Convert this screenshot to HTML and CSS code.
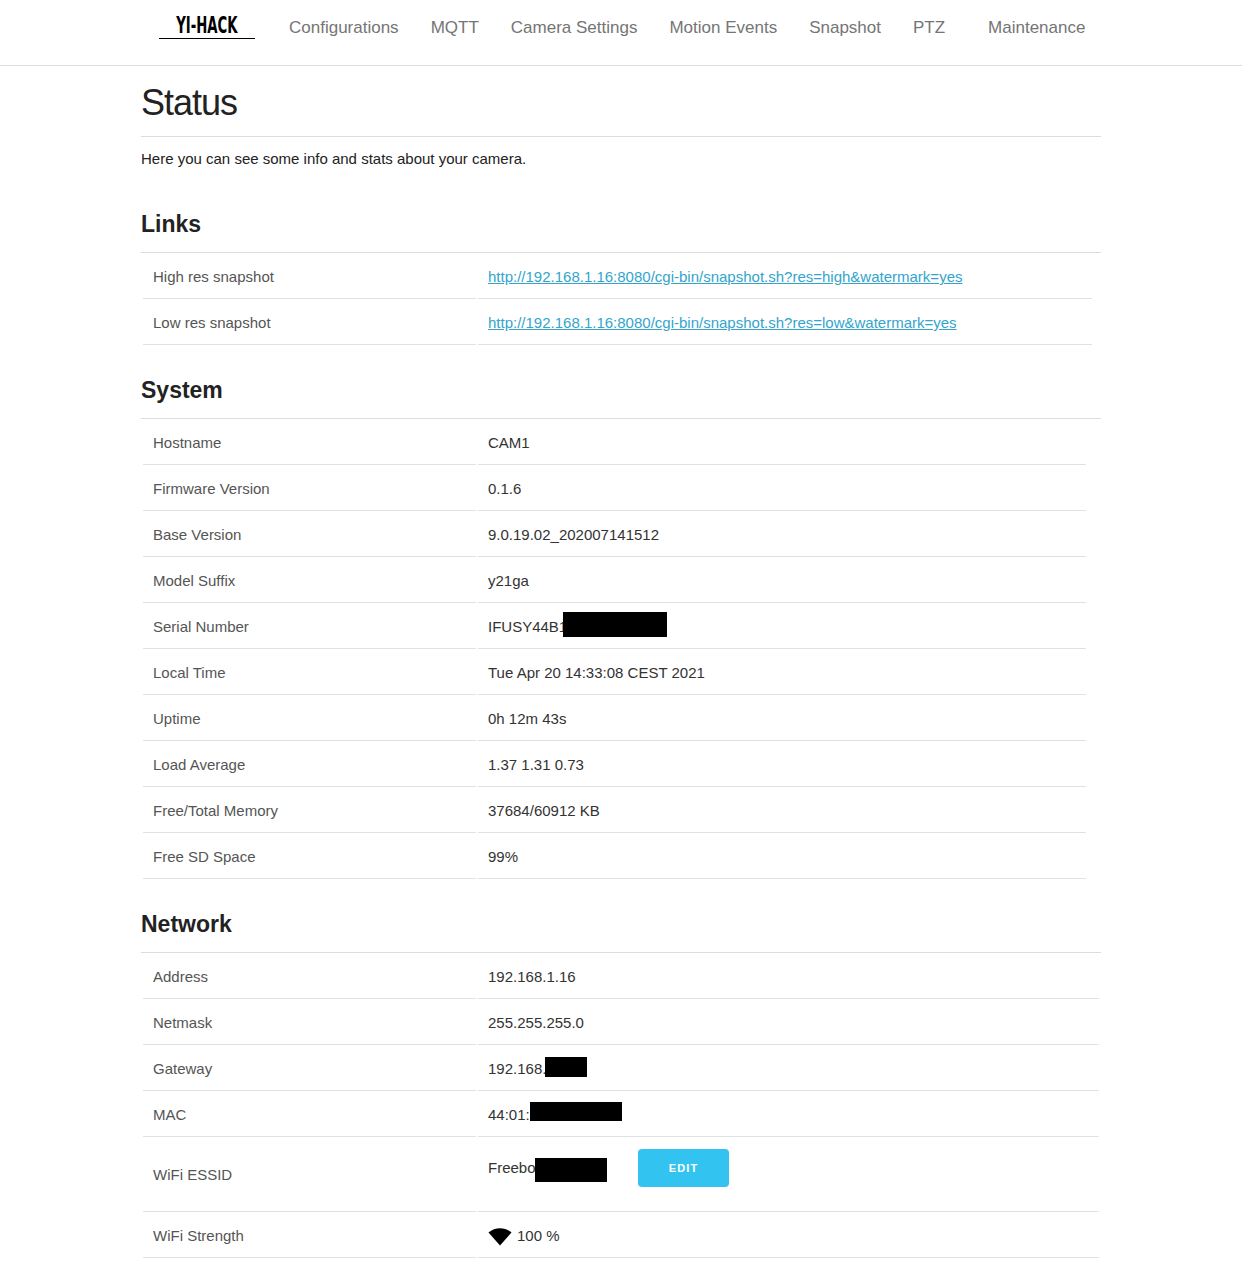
FILE: index.html
```html
<!DOCTYPE html>
<html lang="en">
<head>
<meta charset="utf-8">
<title>Status</title>
<link rel="stylesheet" href="styles.css">
</head>
<body>
<header class="topbar">
  <a class="logo" href="#"><span class="logo-text">YI-HACK</span></a>
  <nav class="menu">
    <a href="#">Configurations</a>
    <a href="#">MQTT</a>
    <a href="#">Camera Settings</a>
    <a href="#">Motion Events</a>
    <a href="#">Snapshot</a>
    <a href="#">PTZ</a>
    <a class="menu-last" href="#">Maintenance</a>
  </nav>
</header>
<main class="page">
  <h1>Status</h1>
  <p class="intro">Here you can see some info and stats about your camera.</p>

  <h2>Links</h2>
  <table class="info info-links">
    <tr><td>High res snapshot</td><td><a href="#">http://192.168.1.16:8080/cgi-bin/snapshot.sh?res=high&amp;watermark=yes</a></td></tr>
    <tr><td>Low res snapshot</td><td><a href="#">http://192.168.1.16:8080/cgi-bin/snapshot.sh?res=low&amp;watermark=yes</a></td></tr>
  </table>

  <h2>System</h2>
  <table class="info info-system">
    <tr><td>Hostname</td><td>CAM1</td></tr>
    <tr><td>Firmware Version</td><td>0.1.6</td></tr>
    <tr><td>Base Version</td><td>9.0.19.02_202007141512</td></tr>
    <tr><td>Model Suffix</td><td>y21ga</td></tr>
    <tr><td>Serial Number</td><td><span class="masked">IFUSY44B1<i class="mask mask-serial"></i></span></td></tr>
    <tr><td>Local Time</td><td>Tue Apr 20 14:33:08 CEST 2021</td></tr>
    <tr><td>Uptime</td><td>0h 12m 43s</td></tr>
    <tr><td>Load Average</td><td>1.37 1.31 0.73</td></tr>
    <tr><td>Free/Total Memory</td><td>37684/60912 KB</td></tr>
    <tr><td>Free SD Space</td><td>99%</td></tr>
  </table>

  <h2>Network</h2>
  <table class="info info-network">
    <tr><td>Address</td><td>192.168.1.16</td></tr>
    <tr><td>Netmask</td><td>255.255.255.0</td></tr>
    <tr><td>Gateway</td><td><span class="masked">192.168.<i class="mask mask-gateway"></i></span></td></tr>
    <tr><td>MAC</td><td><span class="masked">44:01:<i class="mask mask-mac"></i></span></td></tr>
    <tr class="row-essid"><td>WiFi ESSID</td><td><div class="essid"><span class="masked">Freebo<i class="mask mask-essid"></i></span><button class="edit" type="button">EDIT</button></div></td></tr>
    <tr><td>WiFi Strength</td><td><span class="strength"><svg class="wifi" viewBox="0 0 24 20" width="24" height="20" aria-hidden="true"><path d="M0.5 6.5C7 .8 17 .8 23.5 6.5L12 19.5Z" fill="#000"/></svg>100 %</span></td></tr>
  </table>
</main>
</body>
</html>
```
FILE: styles.css
```css
* { box-sizing: border-box; }
html, body { margin: 0; padding: 0; }
body {
  background: #fff;
  color: #222;
  font-family: "Liberation Sans", Arial, sans-serif;
  font-size: 15px;
  line-height: 21px;
  letter-spacing: 0;
}
a { color: inherit; text-decoration: none; }

.topbar {
  height: 66px;
  border-bottom: 1px solid #ddd;
  display: flex;
  align-items: flex-start;
  padding-left: 159px;
}
.logo {
  width: 96px;
  height: 39px;
  border-bottom: 1px solid #000;
  display: flex;
  justify-content: center;
  align-items: flex-end;
}
.logo-text {
  font-family: "DejaVu Sans Condensed", "Liberation Sans", sans-serif;
  font-weight: 700;
  font-size: 23px;
  line-height: 25px;
  color: #000;
  transform: scaleX(0.64);
  white-space: nowrap;
}
.menu {
  display: flex;
  gap: 32px;
  margin-left: 34px;
  padding-top: 18px;
  font-size: 17px;
  line-height: 20px;
  color: #757575;
}
.menu-last { margin-left: 11px; }

.page {
  width: 960px;
  margin-left: 141px;
}
h1 {
  margin: 0;
  padding: 15px 0 12px;
  height: 71px;
  border-bottom: 1px solid #ddd;
  font-size: 36px;
  line-height: 44px;
  font-weight: 400;
  letter-spacing: -1px;
  color: #222;
}
.intro {
  margin: 11px 0 0;
  color: #222;
}
h2 {
  margin: 0;
  height: 45px;
  padding-top: 1px;
  border-bottom: 1px solid #ddd;
  font-size: 23px;
  line-height: 30px;
  font-weight: 700;
  color: #222;
}
.intro + h2 { margin-top: 39px; }
.info + h2 { margin-top: 27px; }

.info {
  border-collapse: separate;
  border-spacing: 2px;
  table-layout: fixed;
}
.info-links { width: 953px; }
.info-system { width: 947px; }
.info-network { width: 960px; }
.info td {
  height: 44px;
  padding: 0 10px;
  border-bottom: 1px solid #e1e1e1;
  vertical-align: middle;
  color: #333;
}
.info td:first-child {
  width: 333px;
  color: #555;
}
.info a {
  color: #33a5cc;
  text-decoration: underline;
}
.masked { position: relative; display: inline-block; }
.mask { position: absolute; background: #000; display: block; }
.mask-serial { left: 75px; top: -4px; width: 104px; height: 25px; }
.mask-gateway { left: 57px; top: -1px; width: 42px; height: 20px; }
.mask-mac { left: 42px; top: -2px; width: 92px; height: 19px; }
.mask-essid { left: 47px; top: 1px; width: 72px; height: 24px; }

.row-essid td { height: 73px; }
.row-essid td:first-child { padding-bottom: 2px; }
.essid {
  display: flex;
  align-items: flex-start;
  gap: 31px;
  padding-bottom: 14px;
}
.essid .masked { width: 119px; margin-top: 8px; }
.edit {
  width: 91px;
  height: 38px;
  border: 0;
  border-radius: 4px;
  background: #33c3f0;
  color: #fff;
  font-family: "Liberation Sans", Arial, sans-serif;
  font-size: 11px;
  font-weight: 700;
  letter-spacing: 1.1px;
}
.strength { display: flex; align-items: center; gap: 5px; }
.wifi { display: block; }
```
